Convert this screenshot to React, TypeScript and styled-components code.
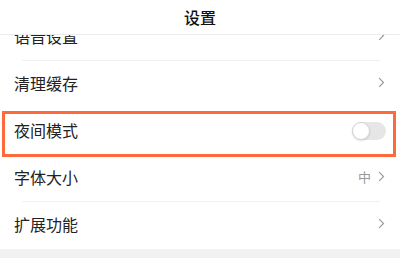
import React from "react";
import styled, { createGlobalStyle } from "styled-components";

const Global = createGlobalStyle`
  html, body { margin: 0; padding: 0; background: #ffffff; }
  body { font-family: "Noto Sans CJK SC", "Noto Sans", sans-serif; }
`;

const Page = styled.div`
  width: 400px;
  height: 258px;
  display: flex;
  flex-direction: column;
  overflow: hidden;
  background: #ffffff;
`;

const Header = styled.header`
  position: relative;
  z-index: 2;
  height: 34px;
  flex: 0 0 34px;
  display: flex;
  align-items: center;
  justify-content: center;
  background: #ffffff;
  border-bottom: 1px solid #ececec;
  font-size: 16px;
  font-weight: 500;
  color: #111;
`;

const Viewport = styled.div`
  flex: 1;
  overflow: hidden;
  background: #f2f2f2;
`;

const List = styled.ul`
  list-style: none;
  margin: -21px 0 0 0;
  padding: 0;
  background: #ffffff;
`;

const Row = styled.li<{ $divider?: boolean }>`
  position: relative;
  height: 47px;
  box-sizing: border-box;
  display: flex;
  align-items: center;
  padding: 0 14px 4px 14px;
  font-size: 16px;
  color: #222;
  &::after {
    content: "";
    display: ${(p) => (p.$divider ? "block" : "none")};
    position: absolute;
    left: 22px;
    right: 20px;
    bottom: 0;
    height: 1px;
    background: #f1f1f1;
  }
`;

const Label = styled.span`
  flex: 1;
`;

const Value = styled.span`
  font-size: 13px;
  color: #999;
  margin-right: 7px;
`;

const Chevron = styled.svg`
  width: 7px;
  height: 11px;
  margin-right: 1px;
`;

const Highlight = styled.div`
  position: absolute;
  left: 2px;
  right: 4px;
  top: 3px;
  bottom: -2px;
  border: 3px solid #ff6a3c;
  pointer-events: none;
`;

const Toggle = styled.div`
  width: 34px;
  height: 18px;
  border-radius: 9px;
  background: #e6e6e6;
  position: relative;
  margin-top: 2px;
`;

const Knob = styled.div`
  position: absolute;
  left: 0;
  top: 0;
  width: 18px;
  height: 18px;
  box-sizing: border-box;
  border-radius: 50%;
  background: #fff;
  border: 1px solid #d4d4d4;
  box-shadow: 0 1px 2px rgba(0, 0, 0, 0.12);
`;

const Arrow = () => (
  <Chevron viewBox="0 0 7 11">
    <path d="M1.2 1.2 L5.5 5.5 L1.2 9.8" fill="none" stroke="#9a9a9a" strokeWidth="1.2" />
  </Chevron>
);

export default function App() {
  return (
    <>
      <Global />
      <Page>
        <Header>设置</Header>
        <Viewport>
          <List>
            <Row $divider>
              <Label>语音设置</Label>
              <Arrow />
            </Row>
            <Row>
              <Label>清理缓存</Label>
              <Arrow />
            </Row>
            <Row>
              <Label>夜间模式</Label>
              <Toggle>
                <Knob />
              </Toggle>
              <Highlight />
            </Row>
            <Row $divider>
              <Label>字体大小</Label>
              <Value>中</Value>
              <Arrow />
            </Row>
            <Row>
              <Label>扩展功能</Label>
              <Arrow />
            </Row>
          </List>
        </Viewport>
      </Page>
    </>
  );
}
